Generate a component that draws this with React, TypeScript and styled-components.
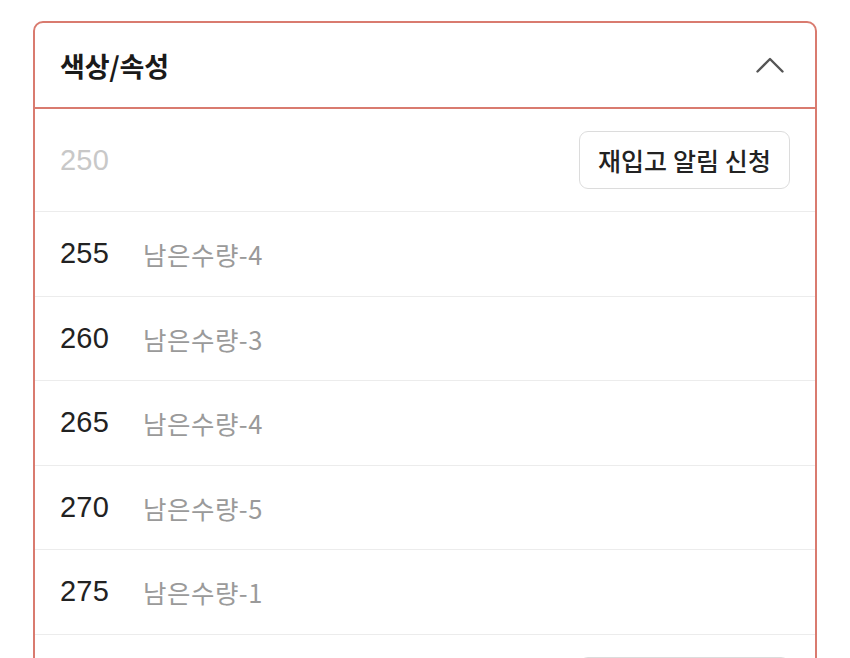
import React from "react";
import styled, { createGlobalStyle } from "styled-components";

const Global = createGlobalStyle`
  html, body { margin: 0; padding: 0; background: #ffffff; }
  body { font-family: "Liberation Sans", "Noto Sans CJK KR", sans-serif; }
`;

const Page = styled.div`
  padding: 21px 33px 0 33px;
  height: 658px;
  overflow: hidden;
  box-sizing: border-box;
`;

const Card = styled.section`
  width: 784px;
  box-sizing: border-box;
  border: 2px solid #d97b6f;
  border-radius: 10px;
  background: #fff;
  overflow: hidden;
`;

const Header = styled.div`
  display: flex;
  align-items: center;
  justify-content: space-between;
  height: 84px;
  padding: 0 31px 0 25px;
  border-bottom: 2px solid #d97b6f;
`;

const Title = styled.h2`
  margin: 0;
  font-family: "Noto Sans CJK KR", "Liberation Sans", sans-serif;
  font-size: 27px;
  font-weight: 700;
  letter-spacing: -0.2px;
  color: #1a1a1a;
`;

const Row = styled.div<{ $tall?: boolean }>`
  display: flex;
  align-items: center;
  height: ${(p) => (p.$tall ? "102px" : "83.5px")};
  padding: 0 25px;
  border-bottom: 1px solid #ececec;
  box-sizing: content-box;
`;

const Size = styled.span<{ $disabled?: boolean }>`
  font-family: "Liberation Sans", "Noto Sans CJK KR", sans-serif;
  font-size: 29px;
  color: ${(p) => (p.$disabled ? "#c8c8c8" : "#222")};
  letter-spacing: 0.2px;
`;

const Stock = styled.span`
  margin-left: 34px;
  font-family: "Noto Sans CJK KR", "Liberation Sans", sans-serif;
  font-size: 25.5px;
  letter-spacing: 0.5px;
  color: #9a9a9a;
`;

const RestockButton = styled.button`
  margin-left: auto;
  height: 58px;
  width: 211px;
  border: 1.5px solid #dcdcdc;
  border-radius: 9px;
  background: #fff;
  font-family: "Noto Sans CJK KR", "Liberation Sans", sans-serif;
  font-size: 25px;
  font-weight: 500;
  letter-spacing: 0.1px;
  color: #222;
  padding: 0;
  cursor: pointer;
`;

const Chevron = () => (
  <svg width="28" height="16" viewBox="0 0 28 16" fill="none">
    <path d="M1.5 14.5 L14 2 L26.5 14.5" stroke="#555" strokeWidth="2.4" strokeLinecap="round" strokeLinejoin="round" />
  </svg>
);

type Item = { size: string; stock?: number; soldOut?: boolean };

const items: Item[] = [
  { size: "250", soldOut: true },
  { size: "255", stock: 4 },
  { size: "260", stock: 3 },
  { size: "265", stock: 4 },
  { size: "270", stock: 5 },
  { size: "275", stock: 1 },
  { size: "280", soldOut: true },
];

export default function App() {
  return (
    <>
      <Global />
      <Page>
        <Card>
          <Header>
            <Title>색상/속성</Title>
            <Chevron />
          </Header>
          {items.map((it) =>
            it.soldOut ? (
              <Row key={it.size} $tall>
                <Size $disabled>{it.size}</Size>
                <RestockButton>재입고 알림 신청</RestockButton>
              </Row>
            ) : (
              <Row key={it.size}>
                <Size>{it.size}</Size>
                <Stock>남은수량-{it.stock}</Stock>
              </Row>
            )
          )}
        </Card>
      </Page>
    </>
  );
}
